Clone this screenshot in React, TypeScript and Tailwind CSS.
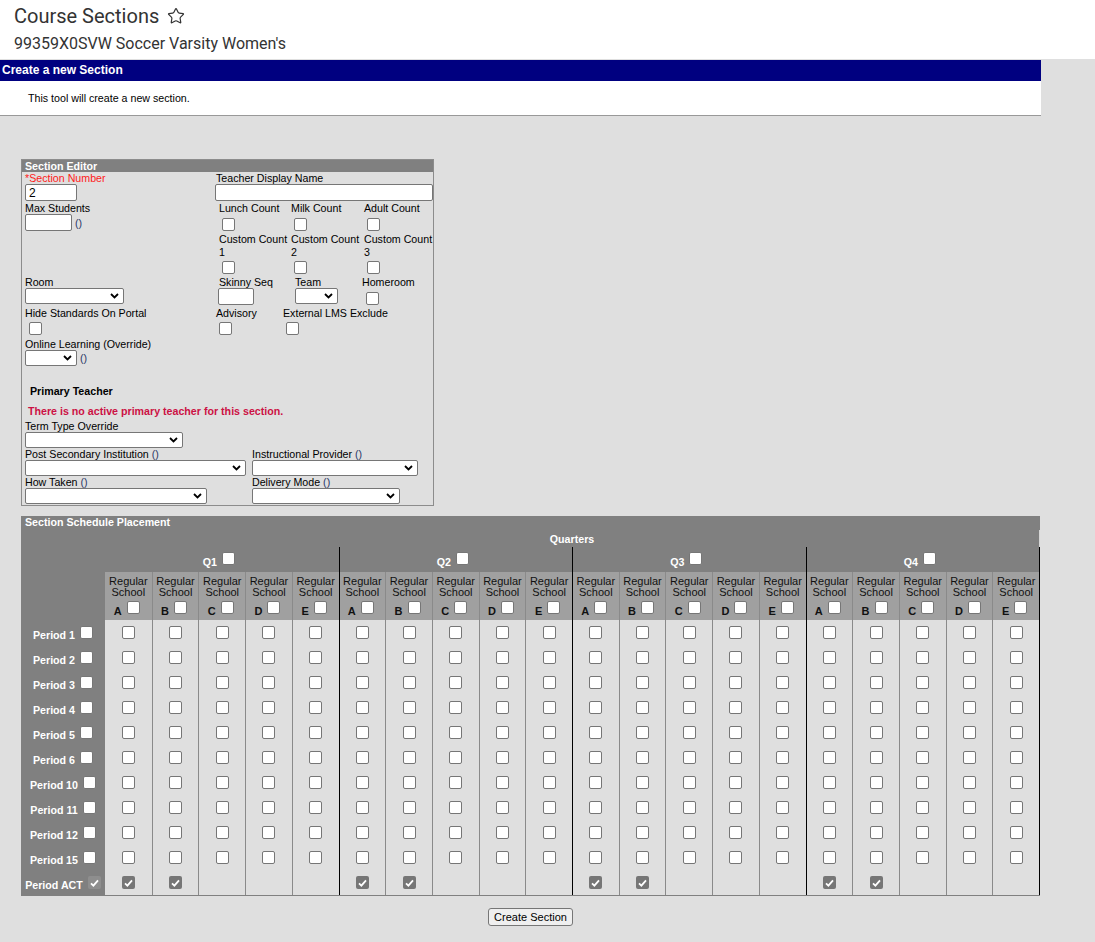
import { Star } from 'lucide-react';

const quarters = ['Q1', 'Q2', 'Q3', 'Q4'];
const letters = ['A', 'B', 'C', 'D', 'E'];
const periods = ['Period 1', 'Period 2', 'Period 3', 'Period 4', 'Period 5', 'Period 6', 'Period 10', 'Period 11', 'Period 12', 'Period 15'];

// checkbox drawn like chrome's native one
function Check({ on = false, faint = false, className = '' }: { on?: boolean; faint?: boolean; className?: string }) {
    if (on) {
        return (
            <span className={`flex h-[13px] w-[13px] shrink-0 items-center justify-center rounded-[2px] ${faint ? 'bg-[#8e8e8e]' : 'bg-[#767676]'} ${className}`}>
                <svg width="9" height="8" viewBox="0 0 9 8">
                    <path d="M1 4.3 3.4 6.6 8 1.3" fill="none" stroke="#fff" strokeWidth="1.8" />
                </svg>
            </span>
        );
    }
    return <span className={`block h-[13px] w-[13px] shrink-0 rounded-[2px] border border-[#767676] bg-white ${className}`} />;
}

function Select({ w }: { w: string }) {
    return (
        <div className={`flex h-[16px] items-center justify-end rounded-[2px] border border-[#767676] bg-white pr-[4px] ${w}`}>
            <svg width="9" height="6" viewBox="0 0 9 6">
                <path d="M1 1l3.5 3.5L8 1" fill="none" stroke="#000" strokeWidth="1.8" />
            </svg>
        </div>
    );
}

function TextBox({ w, value = '' }: { w: string; value?: string }) {
    return (
        <input
            readOnly
            value={value}
            className={`block h-[17px] rounded-[2px] border border-[#767676] bg-white pl-[3px] text-[12px] leading-[15px] outline-none ${w}`}
        />
    );
}

function Help() {
    return <span className="ml-[3px] text-[#2a3766]">()</span>;
}

function SectionEditor() {
    return (
        <div className="ml-[21px] mt-[43px] w-[413px] border border-[#8c8c8c] pb-[1px] text-[8pt]">
            <div className="h-[12px] bg-[#808080] pl-[3px] font-bold leading-[13px] text-white">Section Editor</div>
            <div className="pl-[3px]">
                <div className="flex h-[30px]">
                    <div className="w-[190px]">
                        <div className="leading-[12px] text-[#ff1a1a]">*Section Number</div>
                        <TextBox w="w-[52px]" value="2" />
                    </div>
                    <div className="flex-1">
                        <div className="pl-[1px] leading-[12px]">Teacher Display Name</div>
                        <TextBox w="w-[218px]" />
                    </div>
                </div>

                <div className="flex h-[74px]">
                    <div className="w-[190px]">
                        <div className="leading-[12px]">Max Students</div>
                        <div className="flex items-end">
                            <TextBox w="w-[47px]" />
                            <Help />
                        </div>
                    </div>
                    <div className="flex-1 pl-[4px]">
                        <div className="grid grid-cols-[72px_73px_1fr]">
                            {['Lunch Count', 'Milk Count', 'Adult Count'].map((l) => (
                                <div key={l}>
                                    <div className="whitespace-nowrap leading-[12px]">{l}</div>
                                    <Check className="ml-[3px] mt-[4px]" />
                                </div>
                            ))}
                        </div>
                        <div className="mt-[2px] grid grid-cols-[72px_73px_1fr]">
                            {['1', '2', '3'].map((n) => (
                                <div key={n}>
                                    <div className="whitespace-nowrap leading-[12.5px]">
                                        Custom Count
                                        <br />
                                        {n}
                                    </div>
                                    <Check className="ml-[3px] mt-[3px]" />
                                </div>
                            ))}
                        </div>
                    </div>
                </div>

                <div className="flex h-[31px]">
                    <div className="w-[190px]">
                        <div className="leading-[12px]">Room</div>
                        <Select w="w-[99px]" />
                    </div>
                    <div className="flex flex-1 pl-[3px]">
                        <div className="w-[77px]">
                            <div className="pl-[1px] leading-[12px]">Skinny Seq</div>
                            <TextBox w="w-[36px]" />
                        </div>
                        <div className="w-[67px]">
                            <div className="leading-[12px]">Team</div>
                            <Select w="w-[43px]" />
                        </div>
                        <div>
                            <div className="leading-[12px]">Homeroom</div>
                            <Check className="ml-[4px] mt-[4px]" />
                        </div>
                    </div>
                </div>

                <div className="flex h-[31px]">
                    <div className="w-[190px]">
                        <div className="leading-[12px]">Hide Standards On Portal</div>
                        <Check className="ml-[4px] mt-[3px]" />
                    </div>
                    <div className="flex flex-1 pl-[1px]">
                        <div className="w-[67px]">
                            <div className="leading-[12px]">Advisory</div>
                            <Check className="ml-[3px] mt-[3px]" />
                        </div>
                        <div>
                            <div className="leading-[12px]">External LMS Exclude</div>
                            <Check className="ml-[3px] mt-[3px]" />
                        </div>
                    </div>
                </div>

                <div>
                    <div className="leading-[12px]">Online Learning (Override)</div>
                    <div className="flex items-end">
                        <Select w="w-[52px]" />
                        <Help />
                    </div>
                </div>

                <div className="mt-[19px] pl-[5px] font-bold leading-[12px]">Primary Teacher</div>
                <div className="mt-[8px] pl-[3px] font-bold leading-[12px] text-[#cc1144]">
                    There is no active primary teacher for this section.
                </div>

                <div className="mt-[3px]">
                    <div className="leading-[12px]">Term Type Override</div>
                    <Select w="w-[158px]" />
                </div>
                <div className="flex">
                    <div className="w-[227px]">
                        <div className="leading-[12px]">
                            Post Secondary Institution <span className="text-[#2a3766]">()</span>
                        </div>
                        <Select w="w-[221px]" />
                    </div>
                    <div>
                        <div className="leading-[12px]">
                            Instructional Provider <span className="text-[#2a3766]">()</span>
                        </div>
                        <Select w="w-[166px]" />
                    </div>
                </div>
                <div className="flex">
                    <div className="w-[227px]">
                        <div className="leading-[12px]">
                            How Taken <span className="text-[#2a3766]">()</span>
                        </div>
                        <Select w="w-[182px]" />
                    </div>
                    <div>
                        <div className="leading-[12px]">
                            Delivery Mode <span className="text-[#2a3766]">()</span>
                        </div>
                        <Select w="w-[148px]" />
                    </div>
                </div>
            </div>
        </div>
    );
}

function colBorder(qi: number, li: number) {
    if (li === 0) return qi === 0 ? '' : 'border-l border-l-black';
    return 'border-l border-l-[#8a8a8a]';
}

function SchedulePlacement() {
    return (
        <div className="ml-[21px] mt-[10px] w-[1019px] border-b border-b-[#808080] text-[8pt]">
            <div className="h-[14px] bg-[#808080] pl-[4px] font-bold leading-[13px] text-white">Section Schedule Placement</div>
            <div className="flex h-[17px] bg-[#808080]">
                <div className="w-[84px]" />
                <div className="flex flex-1 items-center justify-center border-r border-r-[#d6d6d6] font-bold text-white">Quarters</div>
            </div>
            <div className="grid grid-cols-[84px_repeat(20,minmax(0,1fr))] border-r border-r-black">
                <div className="row-span-2 bg-[#808080]" />
                {quarters.map((q, qi) => (
                    <div
                        key={q}
                        className={`col-span-5 flex h-[25px] items-end justify-center gap-[5px] bg-[#808080] pb-[4px] pr-[6px] ${qi > 0 ? 'border-l border-l-black' : ''}`}
                    >
                        <span className="font-bold leading-[11px] text-white">{q}</span>
                        <Check className="mb-[3px]" />
                    </div>
                ))}
                {quarters.map((q, qi) =>
                    letters.map((l, li) => (
                        <div
                            key={q + l}
                            className={`flex h-[48px] flex-col items-center bg-[#a0a0a0] pt-[4px] text-[11px] leading-[11px] text-[#111] ${colBorder(qi, li)}`}
                        >
                            <span>Regular</span>
                            <span>School</span>
                            <div className="mt-auto mb-[3px] flex items-end gap-[5px] pr-[3px]">
                                <span className="font-bold leading-[11px]">{l}</span>
                                <Check className="mb-[3px]" />
                            </div>
                        </div>
                    )),
                )}
                {[...periods, 'Period ACT'].map((p) => {
                    const act = p === 'Period ACT';
                    return [
                        <div key={p} className="flex h-[25px] items-end justify-center gap-[5px] bg-[#808080] pb-[4px]">
                            <span className="font-bold leading-[11px] text-white">{p}</span>
                            <Check on={act} faint className="mb-[2px]" />
                        </div>,
                        ...quarters.flatMap((q, qi) =>
                            letters.map((l, li) => (
                                <div key={p + q + l} className={`flex h-[25px] items-center justify-center ${colBorder(qi, li)}`}>
                                    {act ? li < 2 && <Check on /> : <Check />}
                                </div>
                            )),
                        ),
                    ];
                })}
            </div>
        </div>
    );
}

export default function App() {
    return (
        <div className="min-h-screen bg-[#dfdfdf] font-['Liberation_Sans',Arial,sans-serif] text-black">
            <header className="h-[59px] bg-white pl-[14px] font-['Roboto',sans-serif] text-[#333]">
                <div className="flex h-[32px] items-center gap-[8px] text-[20px]">
                    <span>Course Sections</span>
                    <Star size={18} strokeWidth={1.6} />
                </div>
                <div className="text-[16px] leading-[24px]">99359X0SVW Soccer Varsity Women's</div>
            </header>

            <div className="mt-[1px] w-[1041px]">
                <div className="h-[21px] bg-[#000080] pl-[2px] text-[12px] font-bold leading-[21px] text-white">Create a new Section</div>
                <div className="flex h-[35px] items-center border-b border-[#999] bg-white pl-[28px] text-[8pt]">
                    This tool will create a new section.
                </div>
            </div>

            <SectionEditor />
            <SchedulePlacement />

            <div className="flex w-[1061px] justify-center pt-[12px]">
                <button className="h-[18px] w-[85px] rounded-[3px] border border-[#767676] bg-[#efefef] text-[11px] leading-[16px] text-black">
                    Create Section
                </button>
            </div>
        </div>
    );
}
